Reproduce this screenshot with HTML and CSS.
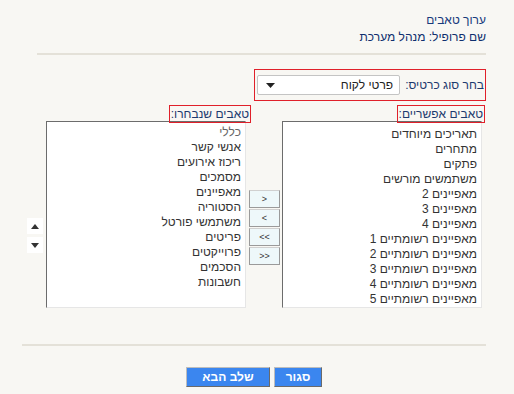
FILE: index.html
```html
<!DOCTYPE html>
<html lang="he" dir="rtl">
<head>
  <meta charset="UTF-8" />
  <title>ערוך טאבים</title>
  <link rel="stylesheet" href="styles.css">
</head>
<body>
  <div class="page">
    <div class="header">
      <div class="title">ערוך טאבים</div>
      <div class="profile">שם פרופיל: מנהל מערכת</div>
    </div>
    <div class="rule rule-top"></div>

    <div class="type-row">
      <div class="type-box">
        <span class="type-label">בחר סוג כרטיס:</span>
        <div class="select">
          <span>פרטי לקוח</span>
          <svg width="9" height="5" viewBox="0 0 9 5"><path d="M0 0h9L4.5 5z" fill="#222"/></svg>
        </div>
      </div>
    </div>

    <div class="lists">
      <div class="col col-avail">
        <div class="tab-label">טאבים אפשריים:</div>
        <ul class="listbox">
          <li>תאריכים מיוחדים</li>
          <li>מתחרים</li>
          <li>פתקים</li>
          <li>משתמשים מורשים</li>
          <li>מאפיינים 2</li>
          <li>מאפיינים 3</li>
          <li>מאפיינים 4</li>
          <li>מאפיינים רשומתיים 1</li>
          <li>מאפיינים רשומתיים 2</li>
          <li>מאפיינים רשומתיים 3</li>
          <li>מאפיינים רשומתיים 4</li>
          <li>מאפיינים רשומתיים 5</li>
        </ul>
      </div>

      <div class="movers">
        <button class="move">&gt;</button>
        <button class="move">&lt;</button>
        <button class="move">&lt;&lt;</button>
        <button class="move">&gt;&gt;</button>
      </div>

      <div class="col col-chosen">
        <div class="tab-label">טאבים שנבחרו:</div>
        <ul class="listbox">
          <li class="first">כללי</li>
          <li>אנשי קשר</li>
          <li>ריכוז אירועים</li>
          <li>מסמכים</li>
          <li>מאפיינים</li>
          <li>הסטוריה</li>
          <li>משתמשי פורטל</li>
          <li>פריטים</li>
          <li>פרוייקטים</li>
          <li>הסכמים</li>
          <li>חשבונות</li>
        </ul>
      </div>

      <div class="order">
        <button class="order-btn"><svg width="8" height="5" viewBox="0 0 8 5"><path d="M4 0L8 5H0z" fill="#333"/></svg></button>
        <button class="order-btn"><svg width="8" height="5" viewBox="0 0 8 5"><path d="M0 0h8L4 5z" fill="#333"/></svg></button>
      </div>
    </div>

    <div class="rule rule-bottom"></div>

    <div class="actions">
      <button class="btn btn-close">סגור</button>
      <button class="btn btn-next">שלב הבא</button>
    </div>
  </div>
</body>
</html>
```

FILE: styles.css
```css
body {
  margin: 0;
  background: #f8f7f3;
  font-family: 'Liberation Sans', Arial, sans-serif;
  font-size: 12px;
  color: #333;
}
.page {
  padding: 12px 28px 0 22px;
}
.header {
  color: #163a7c;
  line-height: 17px;
}
.profile {
  color: #0f2f6e;
}
.rule {
  height: 2px;
  background: #e4e1d8;
}
.rule-top {
  margin: 7px 0 0 15px;
}
.type-row {
  display: flex;
  margin-top: 14px;
}
.type-box {
  display: flex;
  align-items: center;
  width: 227px;
  height: 30px;
  border: 1px solid #e0202a;
  padding: 0 1px 0 2px;
}
.type-label {
  flex: none;
  white-space: nowrap;
  color: #1d3a6e;
  margin-left: 5px;
}
.select {
  flex: 1;
  height: 18px;
  background: #fff;
  border: 1px solid #c4c4c4;
  border-radius: 2px;
  display: flex;
  align-items: center;
  justify-content: space-between;
  padding: 0 6px 0 8px;
  color: #222;
}
.lists {
  display: flex;
  align-items: flex-start;
  margin-top: 4px;
}
.col {
  display: flex;
  flex-direction: column;
  align-items: flex-start;
}
.col-avail {
  width: 203px;
}
.col-avail .tab-label {
  margin-right: 1px;
}
.col-avail .listbox {
  margin-right: 4px;
}
.col-chosen {
  width: 199px;
}
.col-chosen .tab-label {
  margin-right: -5px;
}
.tab-label {
  position: relative;
  z-index: 1;
  height: 16px;
  line-height: 16px;
  padding: 0 1px;
  border: 1px solid #e0202a;
  white-space: nowrap;
  color: #1d3a6e;
}
.listbox {
  list-style: none;
  margin: -2px 0 0 0;
  padding: 5px 4px 0 0;
  width: 194px;
  height: 180px;
  background: #fff;
  border: 1px solid #e6e6e6;
  border-top-color: #6c6c6c;
  border-left-color: #6c6c6c;
  line-height: 15px;
}
.col-chosen .listbox .first {
  color: #666;
  margin-top: -2px;
}
.movers {
  width: 31px;
  margin: 85px 3px 0 3px;
  display: flex;
  flex-direction: column;
  gap: 1px;
}
.move {
  height: 18px;
  padding: 0;
  background: #eef8fa;
  border: 1px solid #9a9a9a;
  border-top-color: #d0d0d0;
  font-family: 'Liberation Sans', Arial, sans-serif;
  font-size: 9px;
  color: #333;
  direction: ltr;
}
.order {
  margin: 113px 4px 0 0;
  display: flex;
  flex-direction: column;
  gap: 3px;
}
.order-btn {
  width: 16px;
  height: 16px;
  padding: 0;
  background: #fff;
  border: none;
  display: flex;
  align-items: center;
  justify-content: center;
}
.rule-bottom {
  margin-top: 36px;
}
.actions {
  display: flex;
  justify-content: center;
  gap: 4px;
  margin-top: 21px;
}
.btn {
  height: 20px;
  padding: 0;
  background: #3b86ef;
  color: #fff;
  font-family: 'Liberation Sans', Arial, sans-serif;
  font-size: 12px;
  font-weight: bold;
  border: 1px solid #6a6a6a;
  border-top-color: #bdbdbd;
  border-left-color: #bdbdbd;
}
.btn-close {
  width: 48px;
}
.btn-next {
  width: 84px;
}
```
